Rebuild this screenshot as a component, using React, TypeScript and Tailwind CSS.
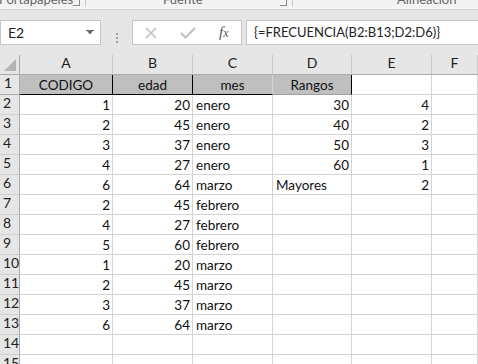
import React from "react";

const rows: (string | number)[][] = [
  [1, 20, "enero", 30, 4],
  [2, 45, "enero", 40, 2],
  [3, 37, "enero", 50, 3],
  [4, 27, "enero", 60, 1],
  [6, 64, "marzo", "Mayores", 2],
  [2, 45, "febrero"],
  [4, 27, "febrero"],
  [5, 60, "febrero"],
  [1, 20, "marzo"],
  [2, 45, "marzo"],
  [3, 37, "marzo"],
  [6, 64, "marzo"],
  [],
  [],
];

const font = { fontFamily: "Lato, 'Open Sans', sans-serif" };

function DataCell({ v }: { v: string | number | undefined }) {
  const isNum = typeof v === "number";
  return (
    <div
      className={`h-[20px] border-r border-b border-[#d4d4d4] flex items-end pb-[1px] text-[13.5px] leading-[16px] text-[#111] overflow-hidden whitespace-nowrap ${
        isNum ? "justify-end pr-[2px]" : "justify-start pl-[3px]"
      }`}
    >
      {v === undefined ? "" : String(v)}
    </div>
  );
}

export default function App() {
  const cols = ["A", "B", "C", "D", "E", "F"];
  return (
    <div className="w-[478px] h-[364px] overflow-hidden bg-[#e6e6e6]" style={font}>
      {/* ribbon group labels */}
      <div className="h-[10px] bg-[#f3f3f3] border-b border-[#d5d5d5] flex text-[13px] leading-[16px] text-[#666] overflow-hidden">
        <div className="w-[86px] flex items-start relative">
          <span className="-mt-[9px] -ml-[1px]">Portapapeles</span>
          <span className="absolute left-[73px] top-[0px] w-[7px] h-[6px] border-r border-b border-[#888]"></span>
          <span className="absolute right-0 top-0 h-[7px] border-r border-[#c8c8c8]"></span>
        </div>
        <div className="w-[207px] flex justify-start relative">
          <span className="-mt-[9px] ml-[77px]">Fuente</span>
          <span className="absolute left-[194px] top-[0px] w-[7px] h-[6px] border-r border-b border-[#888]"></span>
          <span className="absolute right-0 top-0 h-[7px] border-r border-[#c8c8c8]"></span>
        </div>
        <div className="flex-1 flex relative">
          <span className="-mt-[9px] ml-[104px]">Alineación</span>
        </div>
      </div>

      {/* formula bar */}
      <div className="h-[45px] pt-[10px] flex">
        <div className="w-[101px] h-[25px] bg-white border border-[#c6c6c6] flex items-center justify-between pl-[7px] pr-[6px] text-[14px] text-[#222]">
          <span>E2</span>
          <svg width="8" height="5" viewBox="0 0 8 5">
            <rect x="0" y="0" width="8" height="1" fill="#6a6a6a" />
            <polygon points="1,1 7,1 4,4.5" fill="#6a6a6a" />
          </svg>
        </div>
        <div className="w-[31px] flex flex-col items-center justify-center gap-[2px]">
          <span className="w-[2px] h-[2px] bg-[#a0a0a0]"></span>
          <span className="w-[2px] h-[2px] bg-[#a0a0a0]"></span>
          <span className="w-[2px] h-[2px] bg-[#a0a0a0]"></span>
        </div>
        <div className="w-[110px] h-[25px] bg-white border border-[#c6c6c6] flex items-center pl-[12px]">
          <svg width="12" height="12" viewBox="0 0 12 12">
            <path d="M1 1 L11 11 M11 1 L1 11" stroke="#c0c0c0" strokeWidth="1.6" />
          </svg>
          <svg width="16" height="12" viewBox="0 0 16 12" className="ml-[23px]">
            <path d="M1 6 L5.5 10.5 L15 1" stroke="#c0c0c0" strokeWidth="2" fill="none" />
          </svg>
          <span
            className="ml-[23px] text-[15px] italic text-[#555]"
            style={{ fontFamily: "'Liberation Serif', serif" }}
          >
            f<span className="text-[12px]">x</span>
          </span>
        </div>
        <div className="ml-[4px] flex-1 h-[25px] bg-white border border-[#c6c6c6] border-r-0 flex items-center pl-[7px] text-[13px] text-[#222] whitespace-nowrap">
          {"{=FRECUENCIA(B2:B13;D2:D6)}"}
        </div>
      </div>

      {/* grid */}
      <div className="grid grid-cols-[20px_93px_80px_80px_79px_80px_1fr] bg-white">
        <div className="h-[20px] bg-[#e6e6e6] border-r border-b border-[#ababab] flex items-end justify-end pr-[3px] pb-[3px]">
          <svg width="12" height="12" viewBox="0 0 12 12">
            <polygon points="12,0 12,12 0,12" fill="#b4b4b4" />
          </svg>
        </div>
        {cols.map((c) => (
          <div
            key={c}
            className="h-[20px] bg-[#e6e6e6] border-r border-b border-r-[#c8c8c8] border-b-[#ababab] flex items-end pb-[1px] justify-center text-[14px] text-[#222]"
          >
            {c}
          </div>
        ))}

        {/* row 1 */}
        <div className="h-[20px] bg-[#e6e6e6] border-r border-b border-[#ababab] flex items-end pb-[1px] pl-[4px] text-[14px] text-[#222]">
          1
        </div>
        <div className="h-[20px] bg-[#bfbfbf] border-r border-b border-black flex items-end justify-center pb-[1px] text-[13.5px] leading-[16px] text-[#111]">
          CODIGO
        </div>
        <div className="h-[20px] bg-[#bfbfbf] border-r border-b border-black flex items-end justify-center pb-[1px] text-[13.5px] leading-[16px] text-[#111]">
          edad
        </div>
        <div className="h-[20px] bg-[#bfbfbf] border-r border-b border-r-[#d4d4d4] border-b-black flex items-end justify-center pb-[1px] text-[13.5px] leading-[16px] text-[#111]">
          mes
        </div>
        <div className="h-[20px] bg-[#bfbfbf] border-r border-b border-r-black border-b-[#a0a0a0] flex items-end justify-center pb-[1px] text-[13.5px] leading-[16px] text-[#111]">
          Rangos
        </div>
        <DataCell v={undefined} />
        <DataCell v={undefined} />

        {rows.map((r, i) => (
          <React.Fragment key={i}>
            <div className="h-[20px] bg-[#e6e6e6] border-r border-b border-r-[#ababab] border-b-[#d0d0d0] flex items-end pb-[1px] pl-[3px] text-[14px] text-[#222]">
              {i + 2}
            </div>
            {[0, 1, 2, 3, 4, 5].map((j) => (
              <DataCell key={j} v={r[j]} />
            ))}
          </React.Fragment>
        ))}
      </div>
    </div>
  );
}
